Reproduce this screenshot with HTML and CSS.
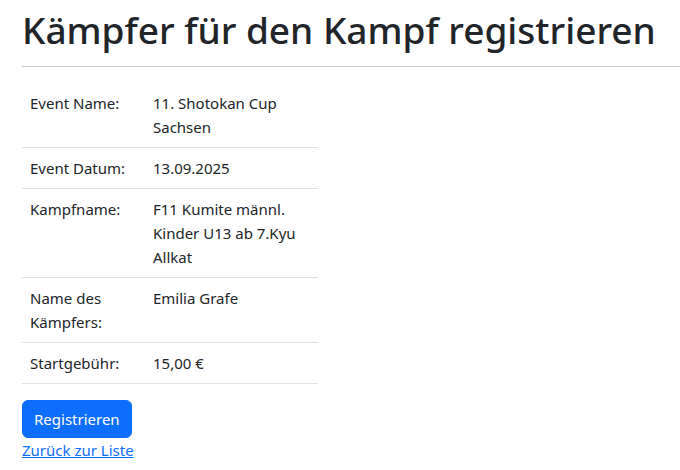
FILE: index.html
```html
<!DOCTYPE html>
<html lang="de">
<head>
<meta charset="utf-8">
<title>Kämpfer registrieren</title>
<link rel="stylesheet" href="styles.css">
</head>
<body>
<main class="page">
  <h1 class="title">Kämpfer für den Kampf registrieren</h1>
  <hr class="divider">
  <table class="details">
    <tbody>
      <tr><th>Event Name:</th><td>11. Shotokan Cup Sachsen</td></tr>
      <tr><th>Event Datum:</th><td>13.09.2025</td></tr>
      <tr><th>Kampfname:</th><td>F11 Kumite männl. Kinder U13 ab 7.Kyu Allkat</td></tr>
      <tr><th>Name des Kämpfers:</th><td>Emilia Grafe</td></tr>
      <tr><th>Startgebühr:</th><td>15,00 €</td></tr>
    </tbody>
  </table>
  <button class="btn-primary" type="button">Registrieren</button>
  <div><a class="back" href="#">Zurück zur Liste</a></div>
</main>
</body>
</html>
```
FILE: styles.css
```css
* { box-sizing: border-box; }
html, body { margin: 0; padding: 0; }
body {
  font-family: "Noto Sans", "Open Sans", sans-serif;
  font-size: 15px;
  line-height: 24px;
  color: #212529;
  background: #fff;
}
.page {
  padding: 0 0 0 22px;
}
.title {
  margin: 0;
  padding-top: 8px;
  font-size: 37px;
  line-height: 44px;
  font-weight: 500;
  white-space: nowrap;
  color: #212529;
}
.divider {
  margin: 14px 0 16px 0;
  border: 0;
  border-top: 1px solid #c8c8c8;
  height: 0;
}
.details {
  width: 296px;
  border-collapse: collapse;
  margin-bottom: 16px;
}
.details th, .details td {
  padding: 8px;
  text-align: left;
  vertical-align: top;
  font-weight: 400;
  border-bottom: 1px solid #dee2e6;
}
.details th { width: 123px; }
.btn-primary {
  display: inline-block;
  font-family: inherit;
  font-size: 15px;
  line-height: 24px;
  padding: 6px 11px;
  color: #fff;
  background: #0d6efd;
  border: 1px solid #0d6efd;
  border-radius: 6px;
}
.back {
  color: #0d6efd;
  text-decoration: underline;
}
```
